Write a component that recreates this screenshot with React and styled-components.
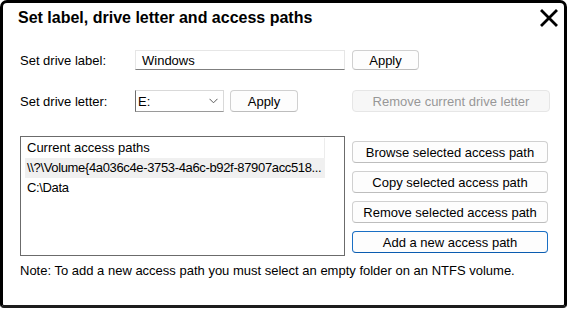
import React from 'react'
import styled, { createGlobalStyle } from 'styled-components'

const GlobalStyle = createGlobalStyle`
    html, body {
        margin: 0;
        padding: 0;
        background: #fff;
    }
    body {
        font-family: "Liberation Sans", Arial, sans-serif;
        color: #000;
    }
`

function App() {
    const paths = [
        '\\\\?\\Volume{4a036c4e-3753-4a6c-b92f-87907acc518...',
        'C:\\Data',
    ]

    return (
        <>
            <GlobalStyle />
            <Dialog>
                <Header>
                    <Title>Set label, drive letter and access paths</Title>
                    <CloseButton aria-label="Close">
                        <svg width="18" height="18" viewBox="0 0 18 18">
                            <path d="M2 2 L16 16 M16 2 L2 16" stroke="#000" strokeWidth="2.8" strokeLinecap="square" fill="none" />
                        </svg>
                    </CloseButton>
                </Header>
                <Body>
                    <Row>
                        <Label>Set drive label:</Label>
                        <TextInput>Windows</TextInput>
                        <Button width="67px">Apply</Button>
                    </Row>
                    <Row top="20px" height="22px">
                        <Label>Set drive letter:</Label>
                        <Field>
                            <Select>
                                <span>E:</span>
                                <svg width="9" height="6" viewBox="0 0 9 6">
                                    <path d="M0.5 0.8 L4.5 4.8 L8.5 0.8" stroke="#5a5a5a" strokeWidth="1" fill="none" />
                                </svg>
                            </Select>
                            <Button width="68px">Apply</Button>
                        </Field>
                        <Button width="198px" disabled>Remove current drive letter</Button>
                    </Row>
                    <Row top="24px" align="flex-start">
                        <ListBox>
                            <ListHeader>Current access paths</ListHeader>
                            {paths.map((p, i) => (
                                <ListItem key={p} selected={i === 0}>{p}</ListItem>
                            ))}
                        </ListBox>
                        <ButtonColumn>
                            <Button width="196px">Browse selected access path</Button>
                            <Button width="196px">Copy selected access path</Button>
                            <Button width="196px">Remove selected access path</Button>
                            <Button width="196px" primary>Add a new access path</Button>
                        </ButtonColumn>
                    </Row>
                    <Note>Note: To add a new access path you must select an empty folder on an NTFS volume.</Note>
                </Body>
            </Dialog>
        </>
    )
}

export default App

const Dialog = styled.div`
    box-sizing: border-box;
    width: 567px;
    height: 308px;
    border: 3px solid #000;
    border-bottom-color: #1c1c1c;
    border-radius: 7px 7px 4px 4px;
    background: #fff;
    display: flex;
    flex-direction: column;
`
const Header = styled.div`
    display: flex;
    align-items: flex-start;
    justify-content: space-between;
    padding: 5px 6px 0 15px;
`
const Title = styled.h1`
    margin: 0;
    font-size: 16px;
    font-weight: bold;
    line-height: 20px;
`
const CloseButton = styled.div`
    width: 18px;
    height: 18px;
    margin-top: 1px;
    svg {
        display: block;
    }
`
const Body = styled.div`
    padding: 22px 0 0 17px;
    display: flex;
    flex-direction: column;
`
const Row = styled.div`
    display: flex;
    align-items: ${p => p.align || 'center'};
    gap: 7px;
    height: ${p => p.height || 'auto'};
    margin-top: ${p => p.top || '0'};
`
const Label = styled.div`
    width: 108px;
    font-size: 13px;
`
const TextInput = styled.div`
    box-sizing: border-box;
    width: 210px;
    height: 20px;
    padding: 0 6px;
    font-size: 13px;
    line-height: 19px;
    border: 1px solid #e6e6e6;
    border-bottom: 1px solid #7f7f7f;
    background: #fff;
`
const Field = styled.div`
    display: flex;
    align-items: center;
    gap: 6px;
    width: 210px;
    height: 100%;
`
const Select = styled.div`
    box-sizing: border-box;
    width: 89px;
    height: 22px;
    display: flex;
    align-items: center;
    justify-content: space-between;
    padding: 0 5px 0 2px;
    font-size: 13px;
    border: 1px solid #d9d9d9;
    border-left-color: #6d6d6d;
    border-bottom-color: #9a9a9a;
    background: #fff;
`
const Button = styled.div`
    box-sizing: border-box;
    width: ${p => p.width};
    height: ${p => (p.width === '67px' ? '20px' : '22px')};
    display: flex;
    align-items: center;
    justify-content: center;
    font-size: 13px;
    white-space: nowrap;
    border-radius: 4px;
    border: 1px solid ${p => (p.primary ? '#1a6fc4' : p.disabled ? '#e6e6e6' : '#d0d0d0')};
    border-bottom-color: ${p => (p.primary ? '#0a5cb0' : p.disabled ? '#e6e6e6' : '#bdbdbd')};
    background: ${p => (p.disabled ? '#f7f7f7' : '#fdfdfd')};
    color: ${p => (p.disabled ? '#979797' : '#000')};
`
const ListBox = styled.div`
    box-sizing: border-box;
    width: 325px;
    height: 120px;
    padding: 1px 0 0 4px;
    border: 1px solid #6b6b6b;
    background: #fff;
`
const ListHeader = styled.div`
    box-sizing: border-box;
    width: 300px;
    height: 20px;
    padding-left: 2px;
    font-size: 13px;
    line-height: 20px;
    border-right: 1px solid #ececec;
`
const ListItem = styled.div`
    box-sizing: border-box;
    width: 300px;
    height: 20px;
    padding-left: 2px;
    font-size: 13px;
    line-height: 20px;
    white-space: nowrap;
    letter-spacing: -0.35px;
    background: ${p => (p.selected ? '#f0f0f0' : 'transparent')};
`
const ButtonColumn = styled.div`
    display: flex;
    flex-direction: column;
    gap: 8px;
    margin-top: 5px;
`
const Note = styled.div`
    margin-top: 7px;
    font-size: 13px;
    line-height: 16px;
`
